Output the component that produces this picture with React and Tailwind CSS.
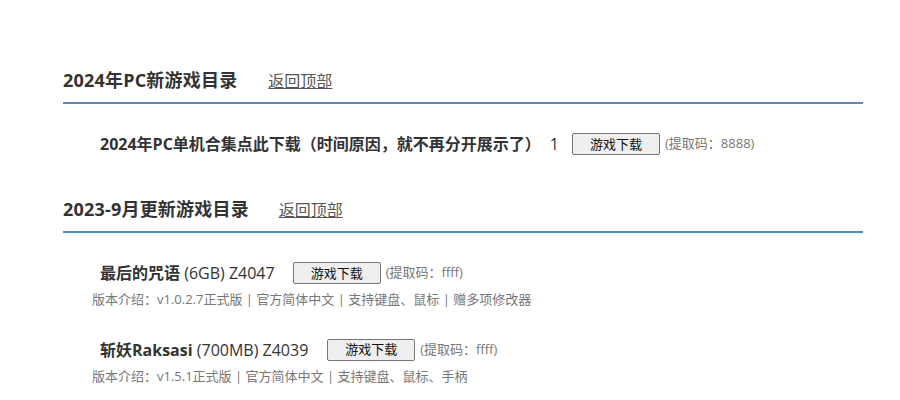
import React from "react";

const font = { fontFamily: '"Segoe UI", "Open Sans", "Noto Sans CJK SC", sans-serif' };

function Btn() {
  return (
    <button className="h-[22px] w-[88px] rounded-[2px] border border-[#767676] bg-[#efefef] text-[13px] text-[#111] leading-none">
      游戏下载
    </button>
  );
}

function Heading({ title, gap }) {
  return (
    <div className="border-b-2 border-[#4a8fd6] pb-[8px] flex items-baseline">
      <span className="text-[18px] font-bold text-[#333] tracking-[0.2px]">{title}</span>
      <a className={`${gap} text-[16px] text-[#555] underline`}>返回顶部</a>
    </div>
  );
}

export default function App() {
  return (
    <div className="w-[900px] h-[400px] bg-white overflow-hidden" style={font}>
      <div className="ml-[63px] w-[800px] pt-[67px]">
        <Heading title="2024年PC新游戏目录" gap="ml-[31px]" />
        <div className="pl-[37px] mt-[29px] flex items-center h-[22px]">
          <span className="text-[16px] font-bold text-[#333]">2024年PC单机合集点此下载（时间原因，就不再分开展示了）</span>
          <span className="ml-[9px] text-[16px] text-[#333]">1</span>
          <span className="ml-[13px] flex"><Btn /></span>
          <span className="ml-[5px] text-[13px] text-[#777]">(提取码：8888)</span>
        </div>
        <div className="pt-[41px]">
          <Heading title="2023-9月更新游戏目录" gap="ml-[30px]" />
        </div>
        <div className="pl-[29px] pt-[28px]">
          <div className="pl-[8px] flex items-center">
            <span className="text-[16px] text-[#333]"><b>最后的咒语</b> (6GB) Z4047</span>
            <span className="ml-[18px] flex"><Btn /></span>
            <span className="ml-[5px] text-[13px] text-[#777]">(提取码：ffff)</span>
          </div>
          <div className="text-[13px] text-[#777] mt-[5px]">版本介绍：v1.0.2.7正式版 | 官方简体中文 | 支持键盘、鼠标 | 赠多项修改器</div>
          <div className="pl-[8px] flex items-center mt-[28px]">
            <span className="text-[16px] text-[#333]"><b>斩妖Raksasi</b> (700MB) Z4039</span>
            <span className="ml-[19px] flex"><Btn /></span>
            <span className="ml-[5px] text-[13px] text-[#777]">(提取码：ffff)</span>
          </div>
          <div className="text-[13px] text-[#777] mt-[5px]">版本介绍：v1.5.1正式版 | 官方简体中文 | 支持键盘、鼠标、手柄</div>
        </div>
      </div>
    </div>
  );
}
